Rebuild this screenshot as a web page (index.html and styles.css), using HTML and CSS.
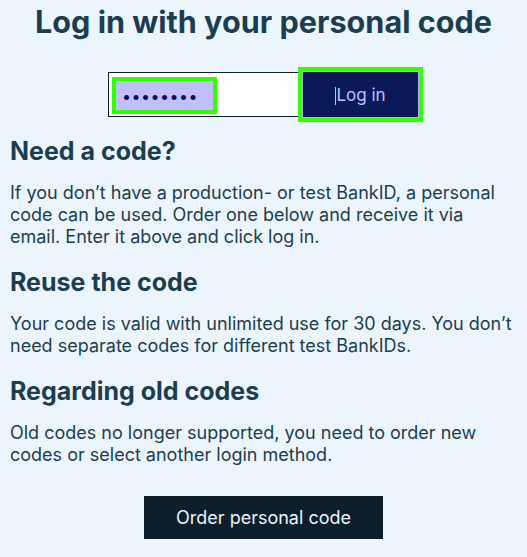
FILE: index.html
```html
<!DOCTYPE html>
<html lang="en">
<head>
<meta charset="utf-8">
<title>Log in with your personal code</title>
<link rel="stylesheet" href="styles.css">
</head>
<body>
<main class="page">
  <h1 class="title">Log in with your personal code</h1>
  <form class="login" onsubmit="return false">
    <div class="field">
      <input class="code" type="password" value="12345678" aria-label="Personal code">
    </div>
    <button class="login-btn" type="submit"><span class="caret"></span>Log in</button>
  </form>

  <section class="info">
    <h2 class="heading">Need a code?</h2>
    <p class="text">If you don’t have a production- or test BankID, a personal code can be used. Order one below and receive it via email. Enter it above and click log in.</p>
  </section>

  <section class="info">
    <h2 class="heading">Reuse the code</h2>
    <p class="text">Your code is valid with unlimited use for 30 days. You don’t need separate codes for different test BankIDs.</p>
  </section>

  <section class="info">
    <h2 class="heading">Regarding old codes</h2>
    <p class="text">Old codes no longer supported, you need to order new codes or select another login method.</p>
  </section>

  <div class="order">
    <button class="order-btn" type="button">Order personal code</button>
  </div>
</main>
</body>
</html>
```

FILE: styles.css
```css
html, body {
  margin: 0;
  padding: 0;
  background: #edf5fc;
}

body {
  font-family: Inter, "Noto Sans", "Liberation Sans", sans-serif;
  color: #1b3d50;
}

.page {
  padding: 0 10px;
}

.title {
  margin: 0;
  padding-top: 4px;
  text-align: center;
  font-size: 30.6px;
  font-weight: 700;
  line-height: 36px;
}

.login {
  display: flex;
  justify-content: center;
  align-items: center;
  margin-top: 31px;
}

.field {
  box-sizing: border-box;
  width: 193px;
  height: 45px;
  background: #ffffff;
  border: 1px solid #0d1f2b;
  border-right: none;
  padding: 8px 7px;
}

.code {
  box-sizing: border-box;
  width: 97px;
  height: 29px;
  border: none;
  margin: 0;
  padding: 0 0 0 6px;
  background: #c0c0ff;
  color: #0a1050;
  font-family: Inter, "Noto Sans", sans-serif;
  font-size: 16px;
  letter-spacing: 0.5px;
  outline: 4px solid #33ff00;
}

.login-btn {
  box-sizing: border-box;
  width: 117px;
  height: 47px;
  margin-left: 1px;
  background: #0a1a58;
  border: 1px solid #b4b4f0;
  color: #c0c0ff;
  font-family: Inter, "Noto Sans", sans-serif;
  font-size: 17px;
  padding: 0;
  outline: 4px solid #33ff00;
}

.caret {
  display: inline-block;
  width: 1px;
  height: 18px;
  background: #c0c0ff;
  vertical-align: -4px;
}

.info {
  margin-top: 19px;
}

.info:first-of-type {
  margin-top: 18px;
}

.heading {
  margin: 0;
  font-size: 25px;
  font-weight: 700;
  line-height: 30px;
}

.text {
  margin: 16px 0 0;
  font-size: 18px;
  line-height: 22px;
}

.order {
  display: flex;
  justify-content: center;
  margin-top: 30px;
}

.order-btn {
  width: 239px;
  height: 43px;
  background: #0d1f2b;
  color: #eaf4ff;
  border: none;
  font-family: Inter, "Noto Sans", sans-serif;
  font-size: 18px;
  padding: 0;
}
```
